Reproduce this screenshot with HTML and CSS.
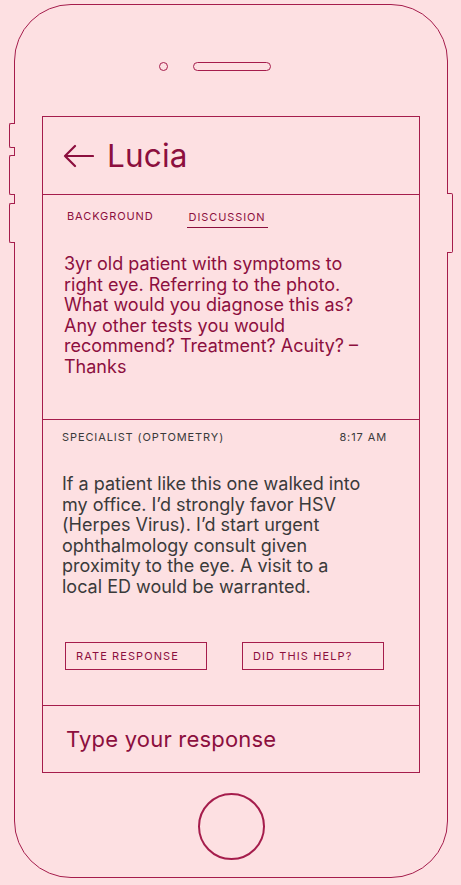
FILE: index.html
```html
<!DOCTYPE html>
<html lang="en">

<head>
    <meta charset="UTF-8">
    <meta name="viewport" content="width=device-width, initial-scale=1.0">
    <title>Lucia - Discussion</title>
    <link rel="stylesheet" href="styles.css">
</head>

<body>
    <div class="phone">
        <span class="side-btn left b1"></span>
        <span class="side-btn left b2"></span>
        <span class="side-btn left b3"></span>
        <span class="side-btn right b4"></span>

        <div class="speaker-row">
            <span class="camera"></span>
            <span class="speaker"></span>
        </div>

        <div class="screen">
            <div class="header">
                <svg class="back" width="31" height="24" viewBox="0 0 31 24" fill="none" stroke="currentColor"
                    stroke-width="2.2" stroke-linecap="round" stroke-linejoin="round">
                    <path d="M30 12H2M12 2L2 12l10 10" />
                </svg>
                <h1>Lucia</h1>
            </div>

            <div class="question">
                <div class="tabs">
                    <span class="tab">Background</span>
                    <span class="tab active">Discussion</span>
                </div>
                <p class="question-text">3yr old patient with symptoms to right eye. Referring to the photo. What would
                    you diagnose this as? Any other tests you would recommend? Treatment? Acuity? – Thanks</p>
            </div>

            <div class="response">
                <div class="response-meta">
                    <span>Specialist (Optometry)</span>
                    <span>8:17 AM</span>
                </div>
                <p class="response-text">If a patient like this one walked into my office. I’d strongly favor HSV
                    (Herpes Virus). I’d start urgent ophthalmology consult given proximity to the eye. A visit to a
                    local ED would be warranted.</p>
                <div class="actions">
                    <button type="button" class="action">Rate Response</button>
                    <button type="button" class="action">Did this help?</button>
                </div>
            </div>

            <div class="reply">Type your response</div>
        </div>

        <div class="home"></div>
    </div>
</body>

</html>
```

FILE: styles.css
```css
:root {
    --bg: #fde0e2;
    --line: #a51d4c;
    --ink: #8c0f3e;
    --grey: #3a3a3a;
}

body {
    margin: 0;
    background-color: var(--bg);
    font-family: Inter, 'Noto Sans', sans-serif;
}

.phone {
    position: relative;
    width: 434px;
    height: 874px;
    margin: 4px 0 0 14px;
    box-sizing: border-box;
    border: 1px solid var(--line);
    border-radius: 57px;
    display: flex;
    flex-direction: column;
}

.side-btn {
    position: absolute;
    width: 5px;
    background: var(--bg);
    border: 1px solid var(--line);
}

.side-btn.left {
    left: -6px;
    border-right: none;
    border-radius: 2px 0 0 2px;
}

.side-btn.right {
    left: 432px;
    border-left: none;
    border-radius: 0 2px 2px 0;
}

.b1 { top: 118px; height: 23px; }
.b2 { top: 150px; height: 38px; }
.b3 { top: 198px; height: 38px; }
.b4 { top: 188px; height: 58px; }

.speaker-row {
    display: flex;
    align-items: center;
    gap: 25px;
    padding: 57px 0 0 144px;
}

.camera {
    width: 7px;
    height: 7px;
    border: 1px solid var(--line);
    border-radius: 50%;
}

.speaker {
    width: 76px;
    height: 7px;
    border: 1px solid var(--line);
    border-radius: 5px;
}

.screen {
    margin: 45px 0 0 27px;
    width: 378px;
    height: 657px;
    box-sizing: border-box;
    border: 1px solid var(--line);
    display: flex;
    flex-direction: column;
}

.header {
    height: 78px;
    box-sizing: border-box;
    border-bottom: 1px solid var(--line);
    display: flex;
    align-items: center;
    gap: 13px;
    padding: 0 0 0 20px;
    color: var(--ink);
}

.header h1 {
    margin: 0;
    font-size: 31.5px;
    font-weight: 400;
    letter-spacing: 0.2px;
}

.question {
    height: 225px;
    box-sizing: border-box;
    border-bottom: 1px solid var(--line);
    padding: 12px 10px 0 21px;
}

.tabs {
    display: flex;
    gap: 31px;
    padding-left: 1px;
}

.tab {
    font-size: 11px;
    letter-spacing: 0.9px;
    text-transform: uppercase;
    color: var(--ink);
    padding: 2px 2px 3px;
    border-bottom: 1px solid transparent;
}

.tab.active {
    border-bottom-color: var(--ink);
    padding-top: 3px;
}

.question-text {
    max-width: 305px;
    margin: 26px 0 0;
    font-size: 18px;
    line-height: 20.5px;
    color: var(--ink);
}

.response {
    height: 286px;
    box-sizing: border-box;
    border-bottom: 1px solid var(--line);
    padding: 10px 32px 0 19px;
    display: flex;
    flex-direction: column;
}

.response-meta {
    display: flex;
    justify-content: space-between;
    font-size: 11px;
    letter-spacing: 0.9px;
    text-transform: uppercase;
    color: var(--grey);
}

.response-text {
    max-width: 302px;
    margin: 30px 0 0;
    font-size: 18px;
    line-height: 20.6px;
    color: var(--grey);
}

.actions {
    display: flex;
    gap: 35px;
    margin-top: 44px;
    padding-left: 3px;
}

.action {
    width: 142px;
    height: 28px;
    box-sizing: border-box;
    background: none;
    border: 1px solid var(--line);
    padding: 0 0 0 10px;
    text-align: left;
    font-family: inherit;
    font-size: 11px;
    letter-spacing: 1.1px;
    text-transform: uppercase;
    color: var(--ink);
}

.reply {
    flex: 1;
    display: flex;
    align-items: center;
    padding: 0 0 1px 23px;
    font-size: 22px;
    letter-spacing: 0.2px;
    color: var(--ink);
}

.home {
    align-self: center;
    margin-top: 20px;
    width: 63px;
    height: 63px;
    border: 2px solid var(--line);
    border-radius: 50%;
}
```
